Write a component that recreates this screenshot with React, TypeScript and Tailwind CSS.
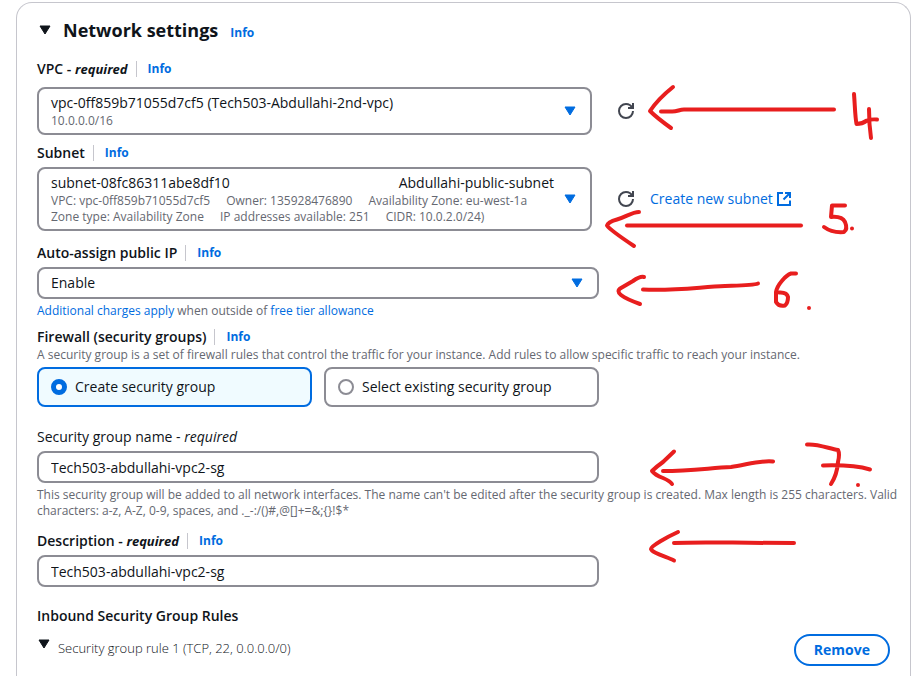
import type { ReactNode } from "react";

function Caret({ className = "" }: { className?: string }) {
  return (
    <svg viewBox="0 0 12 10" aria-hidden="true" className={`pointer-events-none ${className}`}>
      <path d="M1 1h10L6 9z" fill="currentColor" stroke="currentColor" strokeLinejoin="round" />
    </svg>
  );
}

function InfoLink() {
  return (
    <a href="#info" className="text-xs font-bold text-[#006ce0]">
      Info
    </a>
  );
}

function FieldLabel({
  htmlFor,
  required = false,
  children,
}: {
  htmlFor: string;
  required?: boolean;
  children: ReactNode;
}) {
  return (
    <div className="flex h-5 items-center">
      <label htmlFor={htmlFor} className="text-sm leading-5 font-semibold">
        {children}
        {required && (
          <>
            {" - "}
            <i className="text-[13px] font-bold">required</i>
          </>
        )}
      </label>
      <span className="mr-[11px] ml-2 h-4 border-l border-[#c6c6cd]" />
      <InfoLink />
    </div>
  );
}

function RichSelect({
  id,
  value,
  children,
}: {
  id: string;
  value: string;
  children: ReactNode;
}) {
  return (
    <div className="grid w-full max-w-[555px] items-center rounded-lg border-2 border-[#8c8c94]">
      <div aria-hidden="true" className="col-start-1 row-start-1 px-3 py-1">
        {children}
      </div>
      <Caret className="col-start-1 row-start-1 mr-[14px] h-[10px] w-3 justify-self-end text-[#006ce0]" />
      <select id={id} className="col-start-1 row-start-1 h-full w-full cursor-pointer opacity-0">
        <option>{value}</option>
      </select>
    </div>
  );
}

function RefreshButton({ label }: { label: string }) {
  return (
    <button type="button" aria-label={label} className="shrink-0 text-[#424650]">
      <svg viewBox="0 0 16 16" fill="none" stroke="currentColor" strokeWidth="2" className="size-4">
        <path d="M15 8c0 3.870-3.130 7-7 7s-7-3.130-7-7 3.130-7 7-7c2.790 0 5.200 1.630 6.330 4" />
        <path d="M10 5h5V0" />
      </svg>
    </button>
  );
}

function Help({ children }: { children: ReactNode }) {
  return <p className="-mr-3 text-xs leading-4 text-[#656871]">{children}</p>;
}

function Tile({ label, checked = false }: { label: string; checked?: boolean }) {
  return (
    <label
      className={`flex h-10 items-center gap-2 rounded-lg border-2 px-3 text-sm leading-5 ${
        checked ? "border-[#006ce0] bg-[#f0fbff]" : "border-[#8c8c94] bg-white"
      }`}
    >
      <input
        type="radio"
        name="security-group-mode"
        defaultChecked={checked}
        className="size-4 appearance-none rounded-full border-2 border-[#8c8c94] bg-white checked:border-[5px] checked:border-[#006ce0]"
      />
      {label}
    </label>
  );
}

const textBox =
  "block h-8 w-full max-w-[562px] rounded-lg border-2 border-[#8c8c94] bg-white px-3 text-sm leading-5";

function Annotations() {
  return (
    <svg
      width="917"
      height="676"
      viewBox="0 0 917 676"
      aria-hidden="true"
      className="pointer-events-none absolute top-0 left-0"
      fill="none"
      stroke="#e81e1e"
      strokeWidth="4"
      strokeLinecap="round"
      strokeLinejoin="round"
    >
      {/* step 4 */}
      <path d="M673 87Q658 99 650 111Q657 118 671 128" />
      <path d="M661 111.500H671C677 112 679 109.500 684 109.500H834" />
      <path d="M854 94C855 106 855 116 856.500 124Q862 124 867 120.500Q871 119 877 119.500M869 109Q869 124 871 138" />
      {/* step 5 */}
      <path d="M639 212C632 212 626 217 617 219.500Q608 222 607 225.500Q610 230 634 246" />
      <path d="M627 225.500H801" />
      <path d="M845 205.500H832L831 217Q842 216 845 222Q848 229 844 232Q832 233 824 227M852 228.500V228.500" />
      {/* step 6 */}
      <path d="M644 277Q640 276 633 281L621 288Q616 291 621 295Q626 299 640 304" />
      <path d="M643 289.500C675 291 700 287 725 286C742 285.500 753 285.500 758 283.500" />
      <path d="M796 273.500H791C786 275 777 285 776 292V302Q779 307 785 305.500Q788 303 788 297Q787 292 779 292.500M809 308V308" />
      {/* step 7 */}
      <path d="M674 451.500L663 462Q656 467 652 471Q655 475 663 478Q670 481 672 484" />
      <path d="M663 471C690 471 710 468 731 467C746 465 760 460 773 461.500" />
      <path d="M807 444.500C818 443.500 830 449 838 450Q840 454 838 462Q837 475 831 484M823 465.500C840 465 858 466 870 469.500M858 485V485" />
      {/* description */}
      <path d="M678 532C667 537 651 546 651 549C652 553 667 557 674 560.500" />
      <path d="M674 543C700 541.500 730 543 794 543" />
    </svg>
  );
}

export default function App() {
  return (
    <div className="relative flex h-screen overflow-hidden bg-white pt-[2px] pr-[6px] pl-4 font-['Open_Sans','Noto_Sans',sans-serif] text-[#0f141a]">
      <main className="h-fit min-h-full min-w-0 flex-1 rounded-t-2xl border border-b-0 border-[#c6c6cd] px-5">
        <header className="mt-[15px] flex h-6 items-center">
          <button type="button" aria-label="Collapse network settings" className="mr-3 ml-[2px]">
            <Caret className="h-[10px] w-3" />
          </button>
          <h2 className="mr-3 text-lg leading-6 font-bold">Network settings</h2>
          <span className="pt-[2px]">
            <InfoLink />
          </span>
        </header>

        <section className="mt-[17px]">
          <FieldLabel htmlFor="vpc" required>
            VPC
          </FieldLabel>
          <div className="mt-2 flex items-center gap-[26px]">
            <RichSelect id="vpc" value="vpc-0ff859b71055d7cf5 (Tech503-Abdullahi-2nd-vpc)">
              <p className="text-sm leading-5">vpc-0ff859b71055d7cf5 (Tech503-Abdullahi-2nd-vpc)</p>
              <Help>10.0.0.0/16</Help>
            </RichSelect>
            <RefreshButton label="Refresh VPCs" />
          </div>
        </section>

        <section className="mt-2">
          <FieldLabel htmlFor="subnet">Subnet</FieldLabel>
          <div className="mt-1 flex items-center gap-[26px]">
            <RichSelect id="subnet" value="subnet-08fc86311abe8df10">
              <p className="flex justify-between pr-6 text-sm leading-5">
                <span>subnet-08fc86311abe8df10</span>
                <span>Abdullahi-public-subnet</span>
              </p>
              <Help>
                <span className="flex gap-4">
                  <span>VPC: vpc-0ff859b71055d7cf5</span>
                  <span>Owner: 135928476890</span>
                  <span>Availability Zone: eu-west-1a</span>
                </span>
                <span className="flex gap-4">
                  <span>Zone type: Availability Zone</span>
                  <span>IP addresses available: 251</span>
                  <span>CIDR: 10.0.2.0/24)</span>
                </span>
              </Help>
            </RichSelect>
            <div className="flex shrink-0 items-center gap-4">
              <RefreshButton label="Refresh subnets" />
              <a href="#create-subnet" className="flex items-center gap-1 text-sm leading-5 text-[#006ce0]">
                Create new subnet
                <svg viewBox="1 1 14 14" fill="none" stroke="currentColor" strokeWidth="2" aria-hidden="true" className="size-[14px]">
                  <path d="M7 2H2v12h12V9.500" />
                  <path d="M9 2h5v5M14 2L7.500 8.500" />
                </svg>
              </a>
            </div>
          </div>
        </section>

        <section className="mt-3">
          <FieldLabel htmlFor="public-ip">Auto-assign public IP</FieldLabel>
          <div className="mt-1 mb-1 grid max-w-[562px] items-center">
            <select id="public-ip" className={`${textBox} col-start-1 row-start-1 appearance-none`}>
              <option>Enable</option>
            </select>
            <Caret className="col-start-1 row-start-1 mr-4 h-[10px] w-3 justify-self-end text-[#006ce0]" />
          </div>
          <Help>
            <a href="#charges" className="text-[#006ce0]">Additional charges apply</a> when outside of{" "}
            <a href="#free-tier" className="text-[#006ce0]">free tier allowance</a>
          </Help>
        </section>

        <section className="mt-2">
          <FieldLabel htmlFor="firewall">Firewall (security groups)</FieldLabel>
          <Help>
            A security group is a set of firewall rules that control the traffic for your instance. Add rules to allow
            specific traffic to reach your instance.
          </Help>
          <div id="firewall" role="radiogroup" className="mt-1 grid max-w-[562px] grid-cols-2 gap-3">
            <Tile label="Create security group" checked />
            <Tile label="Select existing security group" />
          </div>
        </section>

        <section className="mt-5">
          <label htmlFor="group-name" className="block text-sm leading-5">
            Security group name - <i>required</i>
          </label>
          <input id="group-name" defaultValue="Tech503-abdullahi-vpc2-sg" className={`${textBox} mt-1 mb-1`} />
          <Help>
            {
              "This security group will be added to all network interfaces. The name can't be edited after the security group is created. Max length is 255 characters. Valid characters: a-z, A-Z, 0-9, spaces, and ._-:/()#,@[]+=&;{}!$*"
            }
          </Help>
        </section>

        <section className="mt-3">
          <FieldLabel htmlFor="description" required>
            Description
          </FieldLabel>
          <input id="description" defaultValue="Tech503-abdullahi-vpc2-sg" className={`${textBox} mt-1`} />
        </section>

        <section className="mt-[19px]">
          <h3 className="text-sm leading-5 font-semibold">Inbound Security Group Rules</h3>
          <div className="mt-2 flex items-start justify-between">
            <button type="button" className="flex items-center gap-2 text-[13px] leading-7 font-light">
              <Caret className="mb-2 ml-px h-[10px] w-3" />
              Security group rule 1 (TCP, 22, 0.0.0.0/0)
            </button>
            <button
              type="button"
              className="h-8 rounded-full border-2 border-[#006ce0] px-[18px] text-sm leading-5 font-bold text-[#006ce0]"
            >
              Remove
            </button>
          </div>
        </section>
      </main>
      <Annotations />
    </div>
  );
}
